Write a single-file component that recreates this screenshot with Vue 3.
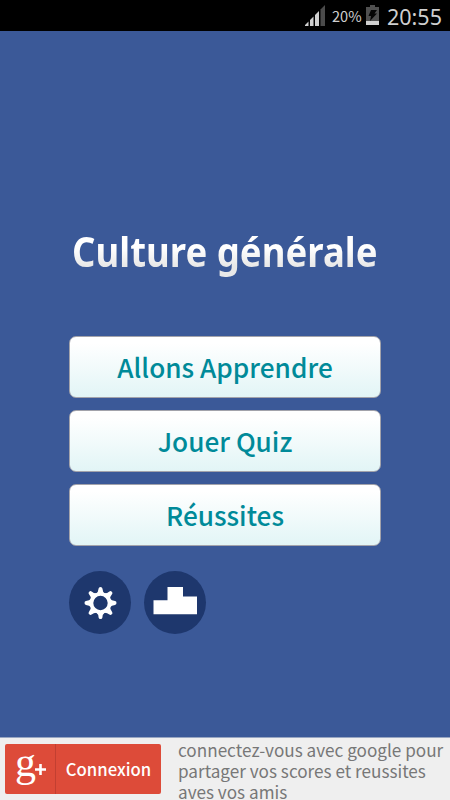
<script setup>
const actions = ['Allons Apprendre', 'Jouer Quiz', 'Réussites']
</script>

<template>
  <div class="screen">
    <header class="status">
      <svg class="signal" width="20" height="21" viewBox="0 0 20 21">
        <path d="M15.500 4.500 20 0v21h-4.500z" fill="#4b4b4b" />
        <path d="M0 21v-1l3.500-3.500V21zM5 21v-6l3.500-3.500V21zM10 21V10l4-4v15z" fill="#d0d0d0" />
      </svg>
      <span class="percent">20%</span>
      <svg class="battery" width="13" height="20" viewBox="0 0 13 20">
        <path d="M4 0h5v2h4v18H0V2h4z" fill="#505050" />
        <path d="M0 16h13v4H0z" fill="#d0d0d0" />
        <path d="M5 5h6L8.500 8.500H11L4 16l1-5H2.500z" fill="#050505" />
      </svg>
      <time class="clock">20:55</time>
    </header>

    <main class="main">
      <h1 class="title"><span>Culture générale</span></h1>
      <nav class="menu">
        <button v-for="action in actions" :key="action" class="action">
          <span>{{ action }}</span>
        </button>
      </nav>
      <div class="tools">
        <button class="round" aria-label="Options">
          <svg width="62" height="63" viewBox="0 0 62 63">
            <g fill="#fff">
              <path
                v-for="n in 8"
                :key="n"
                :transform="`rotate(${n * 45} 31.5 32)`"
                d="M27.300 22.500Q29.300 21 29.600 17.500Q29.700 16 31.500 16Q33.300 16 33.400 17.500Q33.700 21 35.700 22.500z"
              />
            </g>
            <circle cx="31.500" cy="32" r="9" fill="none" stroke="#fff" stroke-width="3.600" />
          </svg>
        </button>
        <button class="round" aria-label="Classement">
          <svg width="62" height="63" viewBox="0 0 62 63">
            <path d="M9.500 29.300h14V16h15.500v9.500h14V43.300H9.500z" fill="#fff" />
          </svg>
        </button>
      </div>
    </main>

    <footer class="footer">
      <button class="signin">
        <span class="logo">
          <span class="logo-g">g</span>
          <svg class="plus" width="11" height="11" viewBox="0 0 11 11">
            <path d="M5.500 0v11M0 5.500h11" stroke="#fff" stroke-width="2.600" />
          </svg>
        </span>
        <span class="label">Connexion</span>
      </button>
      <p class="hint">
        connectez-vous avec google pour<br />
        partager vos scores et reussites<br />
        aves vos amis
      </p>
    </footer>
  </div>
</template>

<style>
body {
  margin: 0;
}
</style>

<style scoped>
.screen {
  width: 450px;
  height: 800px;
  display: flex;
  flex-direction: column;
  overflow: hidden;
  background: #3b5998;
  font-family: "Noto Sans", sans-serif;
}
button {
  border: 0;
  padding: 0;
  margin: 0;
  font: inherit;
  box-sizing: border-box;
}
.status {
  height: 31px;
  flex: none;
  box-sizing: border-box;
  padding: 5px 0 0 305px;
  display: flex;
  background: #000;
  color: #cfcfcf;
  white-space: nowrap;
}
.percent {
  width: 30px;
  margin-left: 7px;
  font-family: "Noto Sans CJK SC", sans-serif;
  font-size: 14.600px;
  line-height: 22px;
}
.battery {
  margin-left: 4px;
}
.clock {
  margin-left: 8px;
  font-size: 21.500px;
  line-height: 23px;
}
.main {
  flex: 1;
  display: flex;
  flex-direction: column;
  padding: 0 69px;
}
.title {
  margin: 190px 0 0;
  height: 60px;
  padding-left: 3px;
  font: 700 41px/60px "Noto Sans", sans-serif;
  white-space: nowrap;
}
.title span {
  display: inline-block;
  transform: scaleX(0.892);
  transform-origin: 0 0;
  color: transparent;
  background: linear-gradient(#fff 45%, #e8e8e8 75%);
  background-clip: text;
}
.menu {
  margin-top: 55px;
  display: flex;
  flex-direction: column;
  gap: 12px;
}
.action {
  height: 62px;
  border: 1px solid #a3a3ab;
  border-radius: 7px;
  background: linear-gradient(#fff 10%, #e2f5f6);
  color: #008a99;
  font-family: "Noto Sans CJK SC", sans-serif;
  font-size: 26.200px;
  font-weight: 500;
  line-height: 60px;
}
.tools {
  display: flex;
  gap: 13px;
  margin-top: 25px;
}
.round {
  width: 62px;
  height: 63px;
  border-radius: 50%;
  background: #1e376d;
}
.round svg {
  display: block;
}
.footer {
  height: 63px;
  flex: none;
  box-sizing: border-box;
  border-top: 1px solid #98a6c2;
  padding: 6px 0 0 5px;
  display: flex;
  background: #efefef;
}
.signin {
  width: 156px;
  height: 50px;
  flex: none;
  display: flex;
  border-radius: 2px;
  background: #dd4b39;
  color: #fff;
}
.logo {
  width: 51px;
  height: 50px;
  flex: none;
  box-sizing: border-box;
  border-right: 1px solid #c23f31;
  padding-left: 10px;
  display: flex;
}
.logo-g {
  width: 20px;
  font: 42px/37px "Liberation Serif", serif;
}
.plus {
  margin-top: 20px;
}
.label {
  flex: 1;
  font-family: "Noto Sans CJK SC", sans-serif;
  font-size: 16.700px;
  font-weight: 500;
  line-height: 51px;
}
.hint {
  flex: none;
  margin: -5px 0 0 17px;
  color: #777;
  font-family: "Noto Sans CJK SC", sans-serif;
  font-size: 17.150px;
  line-height: 21px;
  white-space: nowrap;
}
</style>
